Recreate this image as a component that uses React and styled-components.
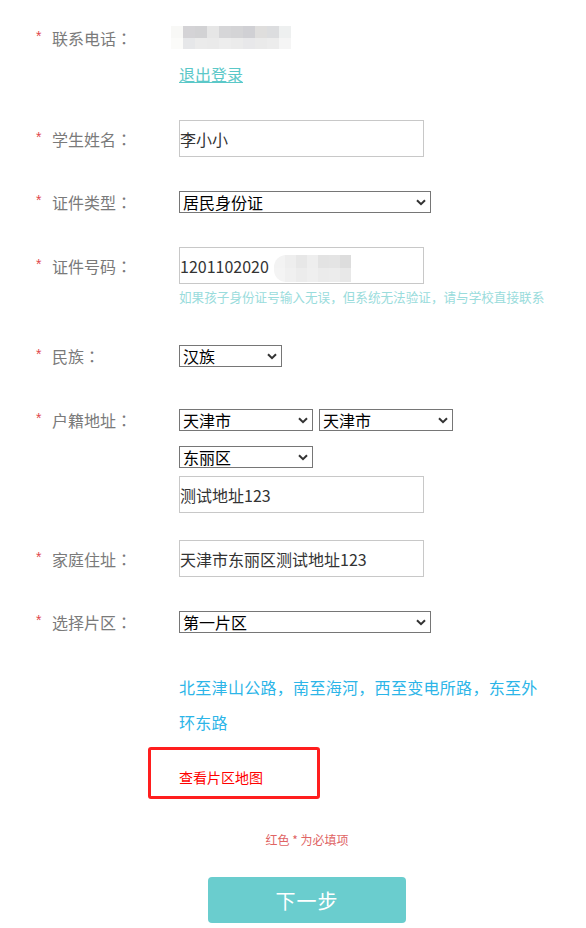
import React from "react";
import styled, { createGlobalStyle } from "styled-components";

const Global = createGlobalStyle`
  html, body { margin: 0; padding: 0; background: #fff; }
  body { font-family: "Noto Sans CJK SC", "Microsoft YaHei", sans-serif; }
  * { box-sizing: border-box; }
`;

const Page = styled.div`
  width: 586px;
  padding-top: 26px;
  padding-bottom: 5px;
`;

const Row = styled.div`
  display: grid;
  grid-template-columns: 179px 1fr;
  margin-top: ${(p) => p.$gap || 0}px;
`;

const LabelCell = styled.div`
  display: flex;
  align-items: center;
  height: ${(p) => p.$h}px;
  padding-left: 36px;
  font-size: 16px;
  color: #7a7a7a;
  white-space: nowrap;
`;

const Star = styled.span`
  width: 16px;
  color: #e0474c;
  font-size: 14px;
  font-family: "Liberation Sans", sans-serif;
  position: relative;
  top: -2px;
`;

const Colon = styled.span`
  font-family: "Noto Sans CJK JP", sans-serif;
`;

const Field = styled.div`
  display: flex;
  flex-direction: column;
  align-items: flex-start;
`;

const Mosaic = styled.div`
  display: grid;
  grid-template-columns: repeat(10, 12px);
  grid-template-rows: 12px 11px;
  margin-left: -8px;
`;

const Cell = styled.div`
  background: ${(p) => p.$c};
`;

const Logout = styled.a`
  margin-top: 14px;
  line-height: 22px;
  font-size: 16px;
  color: #5bc8c8;
  text-decoration: underline;
  cursor: pointer;
`;

const TextBox = styled.div`
  position: relative;
  width: 245px;
  height: 37px;
  border: 1px solid #c8c8c8;
  background: #fff;
  display: flex;
  align-items: center;
`;

const Input = styled.input`
  border: none;
  outline: none;
  width: 100%;
  height: 100%;
  padding: 0;
  font-family: "Noto Sans CJK SC", sans-serif;
  font-size: 16px;
  color: #333;
  background: transparent;
`;

const IdBlur = styled.div`
  position: absolute;
  left: 94px;
  top: 7px;
  display: grid;
  grid-template-columns: repeat(7, 11px);
  grid-template-rows: 13px 14px;
  border-radius: 12px 0 0 12px;
  overflow: hidden;
`;

const SelectBox = styled.div`
  width: ${(p) => p.$w}px;
  height: 22px;
  border: 1px solid #767676;
  background: #fff;
  display: flex;
  align-items: center;
  justify-content: space-between;
  padding: 0 4px 0 3px;
  font-size: 16px;
  line-height: 20px;
  color: #000;
  cursor: default;
`;

const SelectText = styled.span`
  white-space: nowrap;
`;

const Chevron = styled.svg`
  width: 10px;
  height: 7px;
  flex: none;
`;

const SelectLine = styled.div`
  display: flex;
  gap: 6px;
  margin-top: ${(p) => p.$gap || 0}px;
`;

const Spaced = styled.div`
  margin-top: ${(p) => p.$gap || 0}px;
`;

const Hint = styled.div`
  margin-top: 2px;
  font-size: 12.6px;
  line-height: 22px;
  color: #9adcdc;
  white-space: nowrap;
`;

const Desc = styled.p`
  margin: 37px 0 0 179px;
  width: 364px;
  font-size: 16px;
  line-height: 35px;
  letter-spacing: 0.3px;
  color: #2cb5e8;
`;

const MapBox = styled.div`
  margin: 7px 0 0 148px;
  width: 172px;
  height: 52px;
  border: 3px solid #ff1e1e;
  border-radius: 3px;
  padding: 17px 0 0 28px;
`;

const MapLink = styled.a`
  font-size: 14px;
  line-height: 20px;
  color: #f00;
  display: block;
`;

const Footer = styled.div`
  padding-left: 28px;
  display: flex;
  flex-direction: column;
  align-items: center;
`;

const Note = styled.div`
  margin-top: 32px;
  font-size: 12px;
  line-height: 18px;
  color: #e06464;
`;

const NextButton = styled.button`
  margin-top: 28px;
  width: 198px;
  height: 46px;
  border: none;
  border-radius: 4px;
  background: #6acdce;
  color: #fff;
  font-family: "Noto Sans CJK SC", sans-serif;
  font-size: 20px;
  letter-spacing: 1px;
  cursor: pointer;
`;

const phoneColors = [
  "#f8f8f6", "#d4d3d6", "#d2d2d4", "#e6e6e6", "#d6d6d8", "#d4d4d6", "#d0d0d4", "#dfdedd", "#dcdddf", "#eef0f0",
  "#fbfbf9", "#e6e7e9", "#ebebeb", "#eaeaea", "#ededed", "#ebebeb", "#e8e8ea", "#eaeaea", "#ececec", "#f5f5f5",
];

const idColors = [
  "#f3f3f3", "#eeeeee", "#e7e7e7", "#eeeeee", "#e3e3e3", "#e4e4e4", "#dddddd",
  "#f4f4f4", "#f0f0f0", "#ececec", "#efefef", "#ebebeb", "#ececec", "#e8e8e8",
];

function Label({ h, children }) {
  return (
    <LabelCell $h={h}>
      <Star>*</Star>
      {children}
      <Colon>：</Colon>
    </LabelCell>
  );
}

function Dropdown({ w, value }) {
  return (
    <SelectBox $w={w} role="combobox">
      <SelectText>{value}</SelectText>
      <Chevron viewBox="0 0 10 7">
        <path d="M1 1.2 L5 5.2 L9 1.2" fill="none" stroke="#333" strokeWidth="2" />
      </Chevron>
    </SelectBox>
  );
}

export default function App() {
  return (
    <>
      <Global />
      <Page>
        <Row>
          <Label h={23}>联系电话</Label>
          <Field>
            <Mosaic>
              {phoneColors.map((c, i) => (
                <Cell key={i} $c={c} />
              ))}
            </Mosaic>
            <Logout>退出登录</Logout>
          </Field>
        </Row>

        <Row $gap={35}>
          <Label h={37}>学生姓名</Label>
          <Field>
            <TextBox>
              <Input defaultValue="李小小" />
            </TextBox>
          </Field>
        </Row>

        <Row $gap={34}>
          <Label h={22}>证件类型</Label>
          <Field>
            <Dropdown w={252} value="居民身份证" />
          </Field>
        </Row>

        <Row $gap={34}>
          <Label h={37}>证件号码</Label>
          <Field>
            <TextBox>
              <Input defaultValue="1201102020" />
              <IdBlur>
                {idColors.map((c, i) => (
                  <Cell key={i} $c={c} />
                ))}
              </IdBlur>
            </TextBox>
            <Hint>如果孩子身份证号输入无误，但系统无法验证，请与学校直接联系</Hint>
          </Field>
        </Row>

        <Row $gap={37}>
          <Label h={22}>民族</Label>
          <Field>
            <Dropdown w={103} value="汉族" />
          </Field>
        </Row>

        <Row $gap={42}>
          <Label h={22}>户籍地址</Label>
          <Field>
            <SelectLine>
              <Dropdown w={134} value="天津市" />
              <Dropdown w={134} value="天津市" />
            </SelectLine>
            <SelectLine $gap={15}>
              <Dropdown w={134} value="东丽区" />
            </SelectLine>
            <Spaced $gap={8}>
              <TextBox>
                <Input defaultValue="测试地址123" />
              </TextBox>
            </Spaced>
          </Field>
        </Row>

        <Row $gap={27}>
          <Label h={37}>家庭住址</Label>
          <Field>
            <TextBox>
              <Input defaultValue="天津市东丽区测试地址123" />
            </TextBox>
          </Field>
        </Row>

        <Row $gap={34}>
          <Label h={22}>选择片区</Label>
          <Field>
            <Dropdown w={252} value="第一片区" />
          </Field>
        </Row>

        <Desc>北至津山公路，南至海河，西至变电所路，东至外环东路</Desc>

        <MapBox>
          <MapLink>查看片区地图</MapLink>
        </MapBox>

        <Footer>
          <Note>红色 * 为必填项</Note>
          <NextButton>下一步</NextButton>
        </Footer>
      </Page>
    </>
  );
}
